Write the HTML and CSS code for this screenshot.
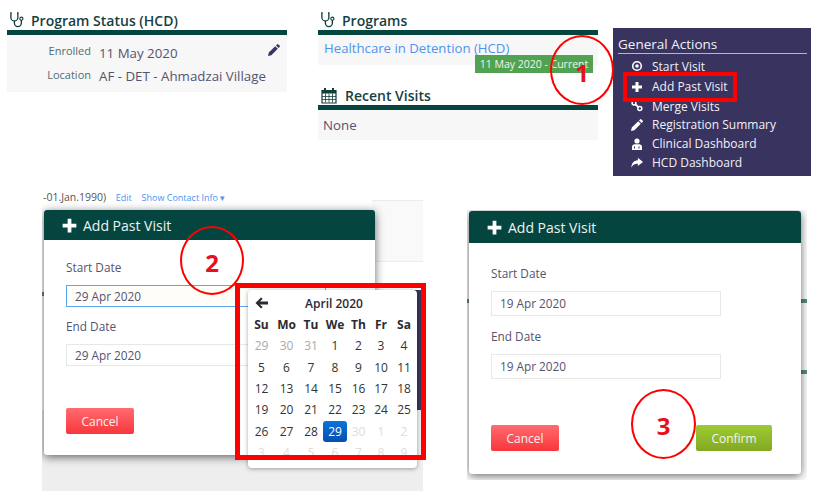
FILE: index.html
```html
<!DOCTYPE html>
<html lang="en">
  <head>
    <meta charset="UTF-8" />
    <title>Add Past Visit</title>
    <link rel="stylesheet" href="styles.css">
  </head>
  <body>
    <div class="canvas">
      <!-- top left: program status -->
      <section class="panel panel-status">
        <h2 class="panel-title">
          <svg class="icon-steth" viewBox="0 0 16 18"><path d="M2 1H1v5a4 4 0 0 0 8 0V1H8M5 10v2.500a4 4 0 0 0 8 0V9" fill="none" stroke="#0f3d3a" stroke-width="1.500"/><circle cx="13" cy="7.500" r="1.800" fill="none" stroke="#0f3d3a" stroke-width="1.300"/></svg>
          Program Status (HCD)
        </h2>
        <div class="panel-body status-body">
          <div class="status-row"><span class="status-key">Enrolled</span><span class="status-val">11 May 2020</span></div>
          <div class="status-row"><span class="status-key">Location</span><span class="status-val">AF - DET - Ahmadzai Village</span></div>
          <svg class="icon-edit" viewBox="0 0 12 12"><path d="M0 12l.8-3.400 6.400-6.400 2.600 2.600-6.400 6.400zM8 1.400l1-1a1 1 0 0 1 1.400 0l1.200 1.200a1 1 0 0 1 0 1.400l-1 1z" fill="#3a3560"/></svg>
        </div>
      </section>

      <!-- top middle: programs and recent visits -->
      <section class="panel panel-programs">
        <h2 class="panel-title">
          <svg class="icon-steth" viewBox="0 0 16 18"><path d="M2 1H1v5a4 4 0 0 0 8 0V1H8M5 10v2.500a4 4 0 0 0 8 0V9" fill="none" stroke="#0f3d3a" stroke-width="1.500"/><circle cx="13" cy="7.500" r="1.800" fill="none" stroke="#0f3d3a" stroke-width="1.300"/></svg>
          Programs
        </h2>
        <div class="panel-body programs-body"><a class="program-link">Healthcare in Detention (HCD)</a></div>
        <h2 class="panel-title title-visits">
          <svg class="icon-cal" viewBox="0 0 16 16"><path d="M1 3h14v12.500H1z" fill="none" stroke="#0f3d3a" stroke-width="1.200"/><path d="M1 2.500h14V6H1z" fill="#0f3d3a"/><path d="M4 .5v3M12 .5v3" stroke="#0f3d3a" stroke-width="2"/><path d="M1 9h14M1 12h14M4.500 6v9M8 6v9M11.500 6v9" stroke="#0f3d3a" stroke-width=".8"/></svg>
          Recent Visits
        </h2>
        <div class="panel-body visits-body">None</div>
      </section>
      <span class="badge-current">11 May 2020 - Current</span>

      <!-- top right: actions menu -->
      <nav class="actions">
        <h3 class="actions-title">General Actions</h3>
        <ul class="actions-list">
          <li><svg viewBox="0 0 12 12"><circle cx="6" cy="6" r="4.300" fill="none" stroke="#fff" stroke-width="1.600"/><circle cx="6" cy="6" r="1.800" fill="#fff"/></svg>Start Visit</li>
          <li><svg viewBox="0 0 12 12"><path d="M4.500 1h3v3.500H11v3H7.500V11h-3V7.500H1v-3h3.500z" fill="#fff"/></svg>Add Past Visit</li>
          <li><svg viewBox="0 0 12 12"><circle cx="3" cy="3" r="1.900" fill="none" stroke="#fff" stroke-width="1.500"/><circle cx="8.800" cy="8.500" r="2" fill="none" stroke="#fff" stroke-width="1.500"/><path d="M4.500 4.500l2.800 2.500" stroke="#fff" stroke-width="1.800"/></svg>Merge Visits</li>
          <li><svg viewBox="0 0 12 12"><path d="M0 12l.8-3.400 6.400-6.400 2.600 2.600-6.400 6.400zM8 1.400l1-1a1 1 0 0 1 1.400 0l1.200 1.200a1 1 0 0 1 0 1.400l-1 1z" fill="#fff"/></svg>Registration Summary</li>
          <li><svg viewBox="0 0 12 12"><circle cx="6" cy="3" r="2.600" fill="#fff"/><path d="M1 12V8.500q0-2 2.500-2.300h5q2.500.3 2.500 2.300V12z" fill="#fff"/><path d="M3.500 8.500v2M8 8.500v2" stroke="#393360" stroke-width="1"/></svg>Clinical Dashboard</li>
          <li><svg viewBox="0 0 14 12"><path d="M8 0l6 4.800-6 4.800V6.800C4.500 6.800 2 7.800.5 11.500.5 6.500 3 3 8 2.800z" fill="#fff"/></svg>HCD Dashboard</li>
        </ul>
      </nav>
      <div class="mark-box"></div>
      <div class="ring ring-1"><span>1</span></div>

      <!-- bottom left: dialog with open date picker -->
      <div class="shot shot-left">
        <p class="shot-crumbs">-01.Jan.1990) <a>Edit</a> <a>Show Contact Info &#9662;</a></p>
        <div class="shot-faint"></div>
        <div class="shot-sliver"></div>
        <div class="shot-floor"></div>
        <div class="shot-dash dash-left"></div>
        <div class="dialog dialog-left">
          <div class="dialog-head">
            <svg viewBox="0 0 12 12"><path d="M4.500 .5h3v4h4v3h-4v4h-3v-4h-4v-3h4z" fill="#fff"/></svg>
            Add Past Visit
          </div>
          <div class="dialog-body">
            <label class="field-label">Start Date</label>
            <div class="field field-focus">29 Apr 2020</div>
            <label class="field-label">End Date</label>
            <div class="field">29 Apr 2020</div>
            <div class="dialog-actions"><button class="btn btn-cancel">Cancel</button></div>
          </div>
        </div>
      </div>
      <div class="picker">
        <div class="picker-head">
          <svg viewBox="0 0 14 12"><path d="M6.500 0l1.800 1.800L5.300 4.500H14v3H5.300l3 2.700L6.500 12 .5 6z" fill="#2b2b33"/></svg>
          <strong>April 2020</strong>
        </div>
        <div class="picker-grid">
          <b>Su</b><b>Mo</b><b>Tu</b><b>We</b><b>Th</b><b>Fr</b><b>Sa</b>
          <i>29</i><i>30</i><i>31</i><span>1</span><span>2</span><span>3</span><span>4</span>
          <span>5</span><span>6</span><span>7</span><span>8</span><span>9</span><span>10</span><span>11</span>
          <span>12</span><span>13</span><span>14</span><span>15</span><span>16</span><span>17</span><span>18</span>
          <span>19</span><span>20</span><span>21</span><span>22</span><span>23</span><span>24</span><span>25</span>
          <span>26</span><span>27</span><span>28</span><span class="day-on">29</span><u>30</u><u>1</u><u>2</u>
          <u>3</u><u>4</u><u>5</u><u>6</u><u>7</u><u>8</u><u>9</u>
        </div>
      </div>
      <div class="mark-box mark-picker"></div>
      <div class="ring ring-2"><span>2</span></div>

      <!-- bottom right: dialog ready to confirm -->
      <div class="shot shot-right">
        <div class="shot-dash dash-r1"></div>
        <div class="shot-dash dash-r2"></div>
        <div class="shot-dash dash-r3"></div>
        <div class="dialog dialog-right">
          <div class="dialog-head">
            <svg viewBox="0 0 12 12"><path d="M4.500 .5h3v4h4v3h-4v4h-3v-4h-4v-3h4z" fill="#fff"/></svg>
            Add Past Visit
          </div>
          <div class="dialog-body">
            <label class="field-label">Start Date</label>
            <div class="field">19 Apr 2020</div>
            <label class="field-label">End Date</label>
            <div class="field">19 Apr 2020</div>
            <div class="dialog-actions">
              <button class="btn btn-cancel">Cancel</button>
              <button class="btn btn-confirm">Confirm</button>
            </div>
          </div>
        </div>
      </div>
      <div class="ring ring-3"><span>3</span></div>
    </div>
  </body>
</html>
```

FILE: styles.css
```css
body {
  margin: 0;
  background-color: #fff;
  font-family: "Open Sans", Arial, sans-serif;
  color: #55536f;
}
.canvas {
  position: relative;
  width: 825px;
  height: 500px;
  overflow: hidden;
}

/* panels */
.panel {
  position: absolute;
  width: 280px;
}
.panel-status {
  left: 7px;
  top: 12px;
}
.panel-programs {
  left: 318px;
  top: 12px;
}
.panel-title {
  display: flex;
  align-items: center;
  gap: 7px;
  height: 16px;
  margin: 0;
  padding: 0 0 2px 3px;
  font-size: 14px;
  font-weight: 600;
  color: #173f3f;
  border-bottom: 5px solid #04463f;
}
.icon-steth {
  width: 14px;
  height: 16px;
}
.icon-cal {
  width: 16px;
  height: 17px;
}
.panel-body {
  background-color: #f7f7f7;
  box-sizing: border-box;
}
.status-body {
  position: relative;
  height: 57px;
  padding-top: 6px;
}
.status-row {
  display: flex;
  align-items: center;
  height: 23.500px;
}
.status-key {
  width: 84px;
  margin-top: -4px;
  text-align: right;
  font-size: 11px;
  color: #4f6d70;
}
.status-val {
  margin-left: 8px;
  font-size: 13.300px;
}
.icon-edit {
  position: absolute;
  right: 7px;
  top: 9px;
  width: 12px;
  height: 12px;
}
.programs-body {
  height: 30px;
  padding: 2px 6px;
  line-height: 20px;
}
.program-link {
  font-size: 13.200px;
  color: #4d94f0;
}
.title-visits {
  margin-top: 22px;
  gap: 8px;
}
.visits-body {
  height: 30px;
  padding: 0 5px;
  line-height: 30px;
  font-size: 13.300px;
}
.badge-current {
  position: absolute;
  left: 475px;
  top: 55px;
  width: 118px;
  height: 18px;
  background-color: #51a351;
  color: #eef7ee;
  font-size: 10.500px;
  line-height: 18px;
  text-align: center;
  white-space: nowrap;
}

/* actions menu */
.actions {
  position: absolute;
  left: 613px;
  top: 28px;
  width: 198px;
  height: 148px;
  box-sizing: border-box;
  padding: 8px 4px 0 5px;
  background-color: #393360;
  color: #f1f1f5;
}
.actions-title {
  margin: 0;
  height: 17px;
  line-height: 17px;
  font-size: 13.500px;
  font-weight: 400;
  border-bottom: 1px solid #b8b6c8;
}
.actions-list {
  list-style: none;
  margin: 3px 0 0;
  padding: 0;
  font-size: 12px;
}
.actions-list li {
  display: flex;
  align-items: center;
  height: 18.800px;
  padding-left: 13px;
}
.actions-list li:nth-child(2) {
  height: 20px;
  margin-top: 1px;
}
.actions-list svg {
  width: 12px;
  height: 12px;
  margin-right: 9px;
  flex: none;
}

/* red annotations */
.mark-box {
  position: absolute;
  left: 623px;
  top: 72px;
  width: 114px;
  height: 30px;
  box-sizing: border-box;
  border: 4px solid #f00;
}
.mark-picker {
  left: 235px;
  top: 283px;
  width: 191px;
  height: 177px;
  border-width: 5px;
}
.ring {
  position: absolute;
  display: flex;
  align-items: center;
  justify-content: center;
  box-sizing: border-box;
  border: 2px solid #f00;
  border-radius: 50%;
  color: #e8101c;
  font-size: 24px;
  font-weight: 700;
}
.ring-1 {
  left: 550px;
  top: 35px;
  width: 64px;
  height: 70px;
}
.ring-1 span {
  margin-top: 5px;
}
.ring-2 {
  left: 180px;
  top: 226px;
  width: 64px;
  height: 69px;
}
.ring-2 span,
.ring-3 span {
  margin-top: 3px;
}
.ring-3 {
  left: 631px;
  top: 389px;
  width: 65px;
  height: 70px;
}

/* screenshots */
.shot {
  position: absolute;
  overflow: hidden;
}
.shot-left {
  left: 42px;
  top: 190px;
  width: 381px;
  height: 301px;
  background-color: #fff;
}
.shot-crumbs {
  margin: 0;
  padding-left: 1px;
  font-size: 10.500px;
  line-height: 14px;
  color: #555;
  white-space: nowrap;
}
.shot-crumbs a {
  margin-left: 7px;
  font-size: 9px;
  color: #4d94f0;
}
.shot-faint {
  position: absolute;
  left: 330px;
  right: 0;
  top: 10px;
  height: 60px;
  background-color: #f9f9f9;
  border-top: 1px solid #ececec;
  border-bottom: 1px solid #ececec;
}
.shot-sliver {
  position: absolute;
  right: 0;
  top: 100px;
  width: 10px;
  height: 120px;
  background-color: #393360;
}
.shot-floor {
  position: absolute;
  left: 0;
  right: 0;
  top: 220px;
  bottom: 0;
  background-color: #eee;
}
.shot-dash {
  position: absolute;
  width: 6px;
  height: 4px;
  background-color: #5a8a85;
}
.dash-left {
  left: 0;
  top: 102px;
}
.shot-right {
  left: 467px;
  top: 210px;
  width: 340px;
  height: 270px;
  background-color: #fff;
}
.dash-r1 {
  right: 0;
  top: 89px;
}
.dash-r2 {
  right: 0;
  top: 160px;
}
.dash-r3 {
  left: 0;
  top: 89px;
}
.dialog {
  position: absolute;
  display: flex;
  flex-direction: column;
  box-sizing: border-box;
  background-color: #fff;
  border-radius: 3px;
  box-shadow: 0 2px 10px rgba(0, 0, 0, 0.6);
}
.dialog-left {
  left: 2px;
  top: 20px;
  width: 331px;
  height: 245px;
}
.dialog-right {
  left: 2px;
  top: 1px;
  width: 332px;
  height: 263px;
}
.dialog-head {
  display: flex;
  align-items: center;
  gap: 6px;
  height: 30px;
  padding-left: 18px;
  padding-top: 1px;
  box-sizing: border-box;
  background-color: #04463f;
  border-radius: 3px 3px 0 0;
  color: #eef3f2;
  font-size: 14px;
}
.dialog-right .dialog-head {
  height: 32px;
}
.dialog-head svg {
  width: 15px;
  height: 15px;
}
.dialog-body {
  display: flex;
  flex-direction: column;
  flex: 1;
  align-items: flex-start;
  padding: 18px 22px 21px;
}
.dialog-right .dialog-body {
  padding: 21px 22px 23px;
}
.field-label {
  height: 18px;
  line-height: 18px;
  font-size: 11.800px;
}
.field {
  box-sizing: border-box;
  width: 230px;
  height: 25px;
  margin: 9px 0 11px;
  padding-left: 8px;
  border: 1px solid #e8e8e8;
  font-size: 11.800px;
  line-height: 23px;
}
.dialog-left .field {
  width: 260px;
  height: 22px;
  margin-bottom: 9.500px;
  line-height: 20px;
}
.field-focus {
  border-color: #5aa5f0;
  background-color: #fffdf8;
}
.dialog-actions {
  display: flex;
  justify-content: space-between;
  align-self: stretch;
  margin-top: auto;
  width: 281px;
}
.btn {
  height: 26px;
  padding: 0;
  border: 0;
  border-radius: 2px;
  font-family: inherit;
  font-size: 12px;
  color: #f4f4f4;
}
.btn-cancel {
  width: 68px;
  background: linear-gradient(#ff6b6f, #f9363c);
}
.btn-confirm {
  width: 76px;
  background: linear-gradient(#9dcb33, #83a822);
}

/* date picker */
.picker {
  position: absolute;
  left: 248px;
  top: 290px;
  width: 169px;
  height: 178px;
  box-sizing: border-box;
  padding: 3px 1px;
  background-color: #fff;
  border-radius: 4px;
  box-shadow: 0 1px 4px rgba(0, 0, 0, 0.35);
  color: #333;
  font-size: 12px;
}
.picker-head {
  position: relative;
  height: 21px;
  line-height: 22px;
  text-align: center;
  color: #2b2b33;
  font-size: 12px;
}
.picker-head svg {
  position: absolute;
  left: 6px;
  top: 4px;
  width: 13px;
  height: 12px;
}
.picker-head strong {
  font-weight: 600;
  margin-left: 3px;
}
.picker-grid {
  display: grid;
  grid-template-columns: 25px 25px 24px 24px 23px 22px 24px;
  grid-auto-rows: 21.300px;
  align-items: center;
  text-align: center;
}
.picker-grid b {
  font-weight: 700;
  color: #2b2b33;
}
.picker-grid i {
  font-style: normal;
  color: #aaa;
}
.picker-grid u {
  text-decoration: none;
  color: #ddd;
}
.day-on {
  height: 21px;
  line-height: 21px;
  border-radius: 3px;
  background: linear-gradient(#0a74da, #0450b0);
  color: #fff;
}
```
